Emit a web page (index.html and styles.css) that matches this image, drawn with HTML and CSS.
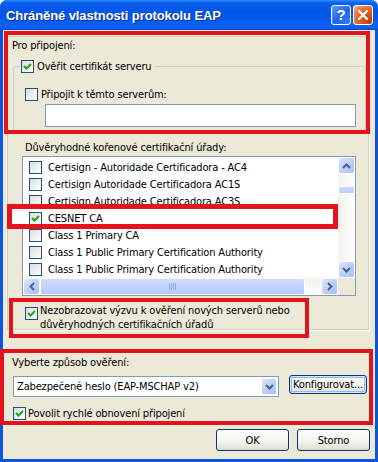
FILE: index.html
```html
<!DOCTYPE html>
<html>
  <head>
    <meta charset="UTF-8" />
    <title>Chráněné vlastnosti protokolu EAP</title>
    <link rel="stylesheet" href="styles.css">
  </head>
  <body>
    <div class="window">
      <div class="titlebar">
        <span class="title">Chráněné vlastnosti protokolu EAP</span>
        <div class="tb-buttons">
          <span class="tb-btn help">?</span>
          <span class="tb-btn close">
            <svg width="12" height="12" viewBox="0 0 12 12"><path d="M2 2 L10 10 M10 2 L2 10" stroke="#fff" stroke-width="2.2" stroke-linecap="round"/></svg>
          </span>
        </div>
      </div>

      <div class="client">
        <div class="frame">
          <div class="label conn-label">Pro připojení:</div>
          <fieldset class="group">
            <legend><span class="check on"></span>Ověřit certifikát serveru</legend>
            <div class="check-row servers"><span class="check"></span>Připojit k těmto serverům:</div>
            <div class="textbox"></div>
          </fieldset>

          <div class="label ca-label">Důvěryhodné kořenové certifikační úřady:</div>
          <div class="listbox">
            <div class="items">
              <div class="item"><span class="check"></span>Certisign - Autoridade Certificadora - AC4</div>
              <div class="item"><span class="check"></span>Certisign Autoridade Certificadora AC1S</div>
              <div class="item"><span class="check"></span>Certisign Autoridade Certificadora AC3S</div>
              <div class="item"><span class="check on"></span>CESNET CA</div>
              <div class="item"><span class="check"></span>Class 1 Primary CA</div>
              <div class="item"><span class="check"></span>Class 1 Public Primary Certification Authority</div>
              <div class="item"><span class="check"></span>Class 1 Public Primary Certification Authority</div>
            </div>
            <div class="vscroll">
              <span class="sb-btn"><svg width="9" height="6" viewBox="0 0 9 6"><path d="M1 5 L4.5 1.5 L8 5" fill="none" stroke="#4d6185" stroke-width="2"/></svg></span>
              <span class="sb-track"><span class="sb-thumb v"></span></span>
              <span class="sb-btn"><svg width="9" height="6" viewBox="0 0 9 6"><path d="M1 1 L4.5 4.5 L8 1" fill="none" stroke="#4d6185" stroke-width="2"/></svg></span>
            </div>
            <div class="hscroll">
              <span class="sb-btn"><svg width="6" height="9" viewBox="0 0 6 9"><path d="M5 1 L1.5 4.5 L5 8" fill="none" stroke="#4d6185" stroke-width="2"/></svg></span>
              <span class="sb-thumb h"><span class="grip"></span></span>
              <span class="sb-track"></span>
              <span class="sb-btn"><svg width="6" height="9" viewBox="0 0 6 9"><path d="M1 1 L4.5 4.5 L1 8" fill="none" stroke="#4d6185" stroke-width="2"/></svg></span>
            </div>
            <div class="corner"></div>
          </div>

          <div class="check-row prompt">
            <span class="check on"></span>
            <span>Nezobrazovat výzvu k ověření nových serverů nebo<br>důvěryhodných certifikačních úřadů</span>
          </div>
        </div>

        <div class="label method-label">Vyberte způsob ověření:</div>
        <div class="method-row">
          <div class="combo">
            <span>Zabezpečené heslo (EAP-MSCHAP v2)</span>
            <span class="drop"><svg width="9" height="6" viewBox="0 0 9 6"><path d="M1 1 L4.5 4.5 L8 1" fill="none" stroke="#4d6185" stroke-width="2"/></svg></span>
          </div>
          <button class="btn default">Konfigurovat...</button>
        </div>
        <div class="check-row fast"><span class="check on"></span>Povolit rychlé obnovení připojení</div>

        <div class="footer">
          <button class="btn">OK</button>
          <button class="btn">Storno</button>
        </div>
      </div>

      <!-- red annotation frames -->
      <div class="mark mark-conn"></div>
      <div class="mark mark-cesnet"></div>
      <div class="mark mark-prompt"></div>
      <div class="mark mark-method"></div>
    </div>
  </body>
</html>
```

FILE: styles.css
```css
* {
  margin: 0;
  padding: 0;
  box-sizing: border-box;
}

body {
  --face: #ece9d8;
  --edge: #7f9db9;
  --red: #e3141b;
  background: #fff;
  font-family: Tahoma, "DejaVu Sans Condensed", "Liberation Sans", sans-serif;
  font-size: 11px;
  line-height: 13px;
  letter-spacing: -0.15px;
  color: #000;
}

.window {
  position: relative;
  width: 378px;
  height: 462px;
  display: flex;
  flex-direction: column;
  border-radius: 7px 7px 0 0;
  overflow: hidden;
  background: #0d55e0;
}

/* title bar */
.titlebar {
  height: 30px;
  display: flex;
  align-items: center;
  justify-content: space-between;
  padding: 0 5px 0 6px;
  background: linear-gradient(180deg, #2a8cff, #0a5fee 10%, #0054e6 45%, #0a62f5 85%, #0d5ff0 94%, #0046d0);
}
.title {
  color: #fff;
  font: bold 13px "Liberation Sans", sans-serif;
  letter-spacing: -0.1px;
  text-shadow: 1px 1px #0f2b8c;
}
.tb-buttons {
  display: flex;
  gap: 2px;
  margin-top: -1px;
}
.tb-btn {
  width: 20px;
  height: 20px;
  border: 1px solid #fff;
  border-radius: 3px;
  display: flex;
  align-items: center;
  justify-content: center;
}
.help {
  background: linear-gradient(135deg, #5a9bff, #2263ea 55%, #3a7cf5);
  color: #fff;
  font: bold 15px "Liberation Sans", sans-serif;
}
.close {
  background: radial-gradient(circle at 85% 85%, #c44000, #dd6128 50%, #e98a5c 80%, #f7c4a7);
}

/* client area */
.client {
  flex: 1;
  background: var(--face);
  border: 3px solid #0d55e0;
  border-top: 0;
  display: flex;
  flex-direction: column;
}

.frame {
  margin: 6px 0 0 4px;
  width: 362px;
  height: 294px;
  border: 1px solid #d0d0bf;
  box-shadow: 1px 1px 0 #fff;
  display: flex;
  flex-direction: column;
  align-items: flex-start;
}

.conn-label {
  margin: 2px 0 0 4px;
}

.group {
  margin: 8px 0 0 5px;
  width: 353px;
  border: 1px solid #d0d0bf;
  border-radius: 3px;
  padding: 0 0 4px 6px;
}
.group legend {
  display: flex;
  align-items: center;
  gap: 3px;
  padding: 0 3px 0 1px;
}

.check-row {
  display: flex;
  align-items: center;
  gap: 3px;
}
.servers {
  margin: 15px 0 0 5px;
}
.textbox {
  margin: 3px 0 0 25px;
  width: 311px;
  height: 23px;
  border: 1px solid var(--edge);
  background: #fff;
}

.check {
  flex: none;
  width: 13px;
  height: 13px;
  border: 1px solid #1c5180;
  background: linear-gradient(135deg, #dcdcd7, #fff);
}
.check.on {
  background-image: url("data:image/svg+xml,%3Csvg xmlns='http://www.w3.org/2000/svg' width='11' height='11'%3E%3Cpath d='M2 5 L4.5 7.5 L9 3' fill='none' stroke='%2321a121' stroke-width='2'/%3E%3C/svg%3E"), linear-gradient(135deg, #dcdcd7, #fff);
}

.ca-label {
  margin: 9px 0 0 17px;
}

/* list of certificates */
.listbox {
  margin: 2px 0 0 14px;
  width: 334px;
  height: 140px;
  border: 1px solid var(--edge);
  background: #fff;
  display: grid;
  grid-template-columns: 1fr 17px;
  grid-template-rows: 1fr 17px;
}
.items {
  padding-top: 2px;
  overflow: hidden;
}
.item {
  height: 17px;
  display: flex;
  align-items: center;
  gap: 6px;
  padding-left: 6px;
  white-space: nowrap;
}

.vscroll {
  display: flex;
  flex-direction: column;
  background: linear-gradient(90deg, #f3f1ec, #fefefb);
}
.hscroll {
  display: flex;
  background: linear-gradient(180deg, #f3f1ec, #fefefb);
}
.sb-btn {
  flex: none;
  width: 17px;
  height: 17px;
  border: 1px solid #fff;
  border-radius: 3px;
  background: linear-gradient(135deg, #dbe6fe, #b8cdf9 60%, #a9c0f3);
  display: flex;
  align-items: center;
  justify-content: center;
}
.sb-track {
  flex: 1;
}
.sb-thumb {
  display: block;
  border: 1px solid #fff;
  border-radius: 2px;
  background: linear-gradient(180deg, #cfdcfd, #b7cbfa);
}
.sb-thumb.v {
  margin-top: 12px;
  height: 8px;
}
.sb-thumb.h {
  width: 265px;
  display: flex;
  align-items: center;
  justify-content: center;
}
.grip {
  width: 7px;
  height: 7px;
  background: repeating-linear-gradient(90deg, #8ea9e8 0 1px, transparent 1px 2px);
}
.corner {
  background: var(--face);
}

.prompt {
  margin: 8px 0 0 17px;
  align-items: flex-start;
  line-height: 14px;
  gap: 2px;
}
.prompt .check {
  margin-top: 3px;
}

/* authentication method */
.method-label {
  margin: 26px 0 0 9px;
}
.method-row {
  display: flex;
  align-items: flex-start;
  margin: 7px 0 0 10px;
}
.combo {
  width: 266px;
  height: 21px;
  border: 1px solid var(--edge);
  background: #fff;
  display: flex;
  align-items: center;
  justify-content: space-between;
  padding: 0 1px 0 3px;
}
.drop {
  width: 16px;
  height: 17px;
  border: 1px solid #fff;
  border-radius: 2px;
  background: linear-gradient(135deg, #dbe6fe, #b8cdf9 60%, #a9c0f3);
  display: flex;
  align-items: center;
  justify-content: center;
}

.btn {
  font: inherit;
  letter-spacing: inherit;
  border: 1px solid #003c74;
  border-radius: 3px;
  background: linear-gradient(180deg, #fff, #f3f3ef 60%, #e2e0d6 92%, #d6d0c5);
  color: #000;
}
.default {
  margin: -1px 0 0 10px;
  width: 78px;
  height: 19px;
  box-shadow: inset 0 0 0 1px #cee7ff, inset 0 0 0 2px #98b8ea;
}
.fast {
  margin: 10px 0 0 10px;
  gap: 2px;
}

.footer {
  display: flex;
  justify-content: flex-end;
  gap: 8px;
  margin-top: 9px;
  padding-right: 5px;
}
.footer .btn {
  width: 73px;
  height: 22px;
}

/* red highlight frames drawn over the dialog */
.mark {
  position: absolute;
  border: 4px solid var(--red);
}
.mark-conn {
  left: 4px;
  top: 31px;
  width: 366px;
  height: 103px;
}
.mark-cesnet {
  left: 7px;
  top: 204px;
  width: 331px;
  height: 25px;
  border-width: 5px;
  background: linear-gradient(90deg, #fff 11px, transparent 11px);
}
.mark-prompt {
  left: 9px;
  top: 298px;
  width: 300px;
  height: 40px;
}
.mark-method {
  left: 0;
  top: 349px;
  width: 373px;
  height: 76px;
}
```
